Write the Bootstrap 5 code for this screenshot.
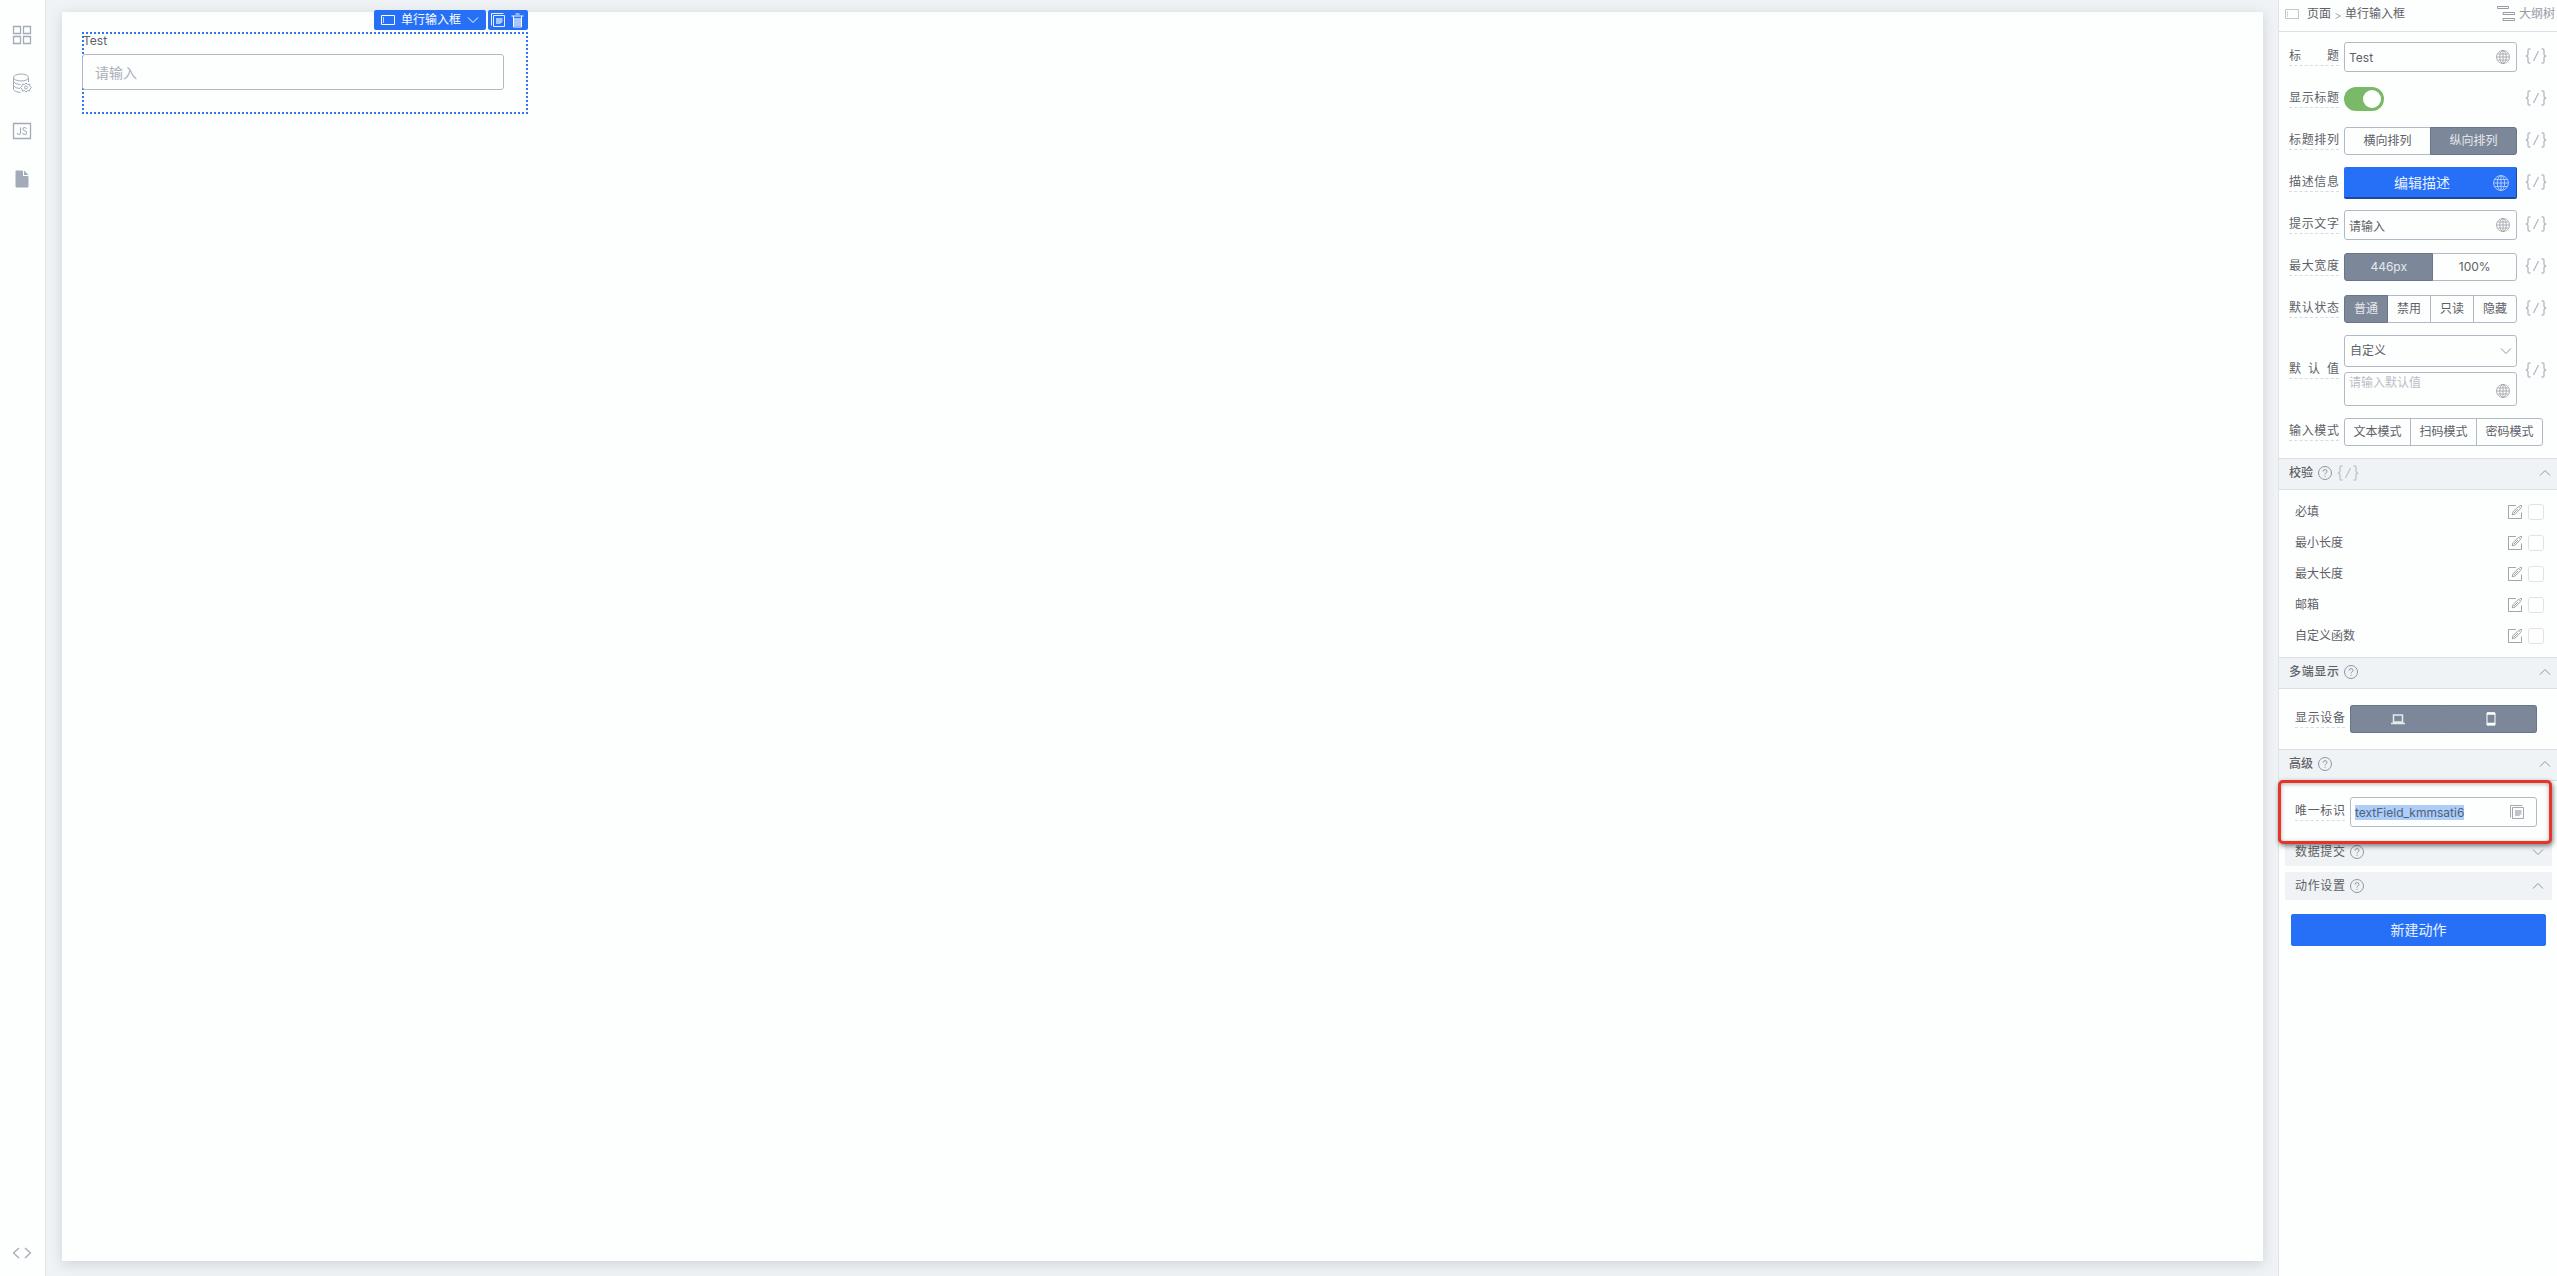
<!DOCTYPE html>
<html lang="zh-CN">
<head>
<meta charset="utf-8">
<meta name="viewport" content="width=device-width, initial-scale=1">
<title>页面设计器</title>
<link href="https://cdn.jsdelivr.net/npm/bootstrap@5.3.0/dist/css/bootstrap.min.css" rel="stylesheet">
<style>
:root{--ink:#5d6167;--line:#b3b9c4;--mute:#a4abb8;--pale:#c3c6ce;--slate:#7c8899;--blue:#2570f7;--bar:#f0f3f5}
body{font-family:Inter,"Noto Sans CJK SC",sans-serif;font-size:12px;line-height:18px;color:var(--ink);background:#eff3f5}
svg{display:block;fill:none;stroke:currentColor}
button{font:inherit}
.icon-btn{border:0;background:none;padding:0;color:inherit;display:block}
.rail{width:46px;background:#fdfefe;border-right:1px solid #e1e5e9;color:var(--mute);padding:23px 2px 11px 0}
.rail-list{gap:24px}
.stage{padding:12px 16px 15px}
.sheet{background:#fdfefe;box-shadow:0 3px 12px rgba(60,70,90,.18);padding:20px}
.widget-box{width:446px;height:82px;border:2px dotted #2f78ec;position:relative}
.widget-box label{display:block;line-height:20px;margin:-3px 0 3px -1px}
.widget-box .form-control{width:422px;height:36px;margin-left:-2px;padding:0 12px;font-size:14px;border-radius:3px}
.widget-tools{position:absolute;right:-2px;top:-24px;gap:2px;color:#fff}
.widget-tools>*{height:20px;background:var(--blue);border-radius:2px}
.tool-name{padding:0 7px;gap:6px;border:0;color:#fff;height:20px}
.tool-pair{width:40px;gap:6px;padding:0 3px}
.panel{width:278px;background:#fdfefe;box-shadow:-1px 0 0 #dfe3e8}
.crumbs{height:32px;border-bottom:1px solid #dce1e7;padding:0 2px 4px 6px}
.crumbs a{color:var(--ink);text-decoration:none}
.fields{padding:4px 10px 5px}
.line{height:42px;gap:5px}
.line-tall{height:81px}
.name{flex:0 0 50px;text-align-last:justify;border-bottom:1px dashed #d8dbe0;margin-top:-2px}
.control{flex:0 0 173px;position:relative}
.code{margin-left:3px;margin-top:-2px;color:#b9bdc6}
.form-control,.form-select{border:1px solid var(--line);border-radius:3px;background-color:#fdfefe;color:var(--ink);font-size:12px;line-height:18px;min-height:0;box-shadow:none!important}
.form-control:focus{border-color:var(--line);color:var(--ink);background-color:#fdfefe}
.form-control::placeholder{color:#a9afba}
.control .form-control{height:30px;padding:0 24px 0 4px}
.control textarea.form-control{height:34px;padding:1px 24px 0 4px;resize:none;margin-top:5px;overflow:hidden}
.control textarea.form-control::placeholder{color:#b9bec7}
.form-select{height:32px;padding:0 24px 0 5px;background-image:none}
.globe{position:absolute;right:7px;top:8px;color:#9a9fa8}
.globe-low{top:auto;bottom:8px}
.select-arrow{position:absolute;right:5px;top:12px;color:#8f959f}
.form-check-input{box-shadow:none!important}
.form-switch{padding:0;min-height:0;margin:0;height:24px}
.form-switch .form-check-input{width:40px;height:24px;margin:0;float:none;display:block;border:0;background-color:#ddd}
.form-switch .form-check-input:checked{background-color:#7ab968}
.btn-group{height:28px}
.btn-seg{--bs-btn-color:var(--ink);--bs-btn-border-color:var(--line);--bs-btn-border-radius:3px;--bs-btn-active-bg:var(--slate);--bs-btn-active-border-color:#69768a;--bs-btn-active-color:#e6e9ed;--bs-btn-font-size:12px;--bs-btn-line-height:18px;--bs-btn-padding-x:0;--bs-btn-padding-y:4px;flex:1 1 0}
.btn-main{--bs-btn-bg:var(--blue);--bs-btn-color:#e9f1fe;--bs-btn-border-color:var(--blue);--bs-btn-border-radius:2px;--bs-btn-font-size:14px;--bs-btn-line-height:20px;--bs-btn-padding-y:5px;width:100%;height:32px}
.btn-shade{border-width:0 1px 2px 0;border-color:#1d48a0;padding:6px 24px 4px 8px}
.btn-shade svg{position:absolute;right:8px;top:8px;color:#b9d0fc}
.strip{height:32px;background:var(--bar);border:solid #dadfe6;border-width:1px 0;padding:0 6px 2px 10px;gap:5px;font-weight:500}
.strip h2,.sub h2{font-size:12px;line-height:18px;font-weight:inherit;margin:0}
.wide{width:50px;text-align-last:justify}
.strip svg,.sub svg{color:#8f96a2}
.strip .code-mark{color:var(--pale)}
.checks{padding:6px 13px 6px 16px;list-style:none;margin:0}
.checks li{height:31px;gap:6px}
.checks .icon-btn{color:#8b8f97}
.checks .form-check-input{width:16px;height:16px;margin:0;border:1px solid #dfe2e8;border-radius:3px}
.device{height:60px;padding:0 20px 0 16px;gap:5px}
.device .btn-group{flex:1}
.btn-seg svg{margin:auto}
.device .btn-check:checked+.btn+.btn-check+.btn{border-left-color:var(--slate)}
.device .btn-check:checked+.btn:first-of-type{border-right-color:var(--slate)}
.marked{border:3px solid #e5342a;border-radius:5px;margin:-1px 5px -6px -1px;height:64px;padding:0 12px 0 14px;gap:5px;position:relative;z-index:1;background:#fdfefe;box-shadow:1px 2px 5px rgba(0,0,0,.5),inset 0 1px 4px rgba(0,0,0,.3)}
.marked .control{flex:1}
.marked .form-control::selection{background:#aecdf8;color:#4e6179}
.copy-id{position:absolute;right:13px;top:8px;color:#9a9fa8}
.sub{height:28px;background:var(--bar);margin:0 5px 6px 6px;padding:0 8px 0 10px;gap:5px}
.sub-first{margin-top:-1px}
.foot{padding:8px 11px 0 12px}
</style>
</head>
<body>
<svg width="0" height="0" class="position-absolute" aria-hidden="true">
<symbol id="globe" viewBox="0 0 14 14"><g stroke-width=".8"><circle cx="7" cy="7" r="6.500"/><ellipse cx="7" cy="7" rx="3.200" ry="6.500"/><path d="M7 .5v13M.5 7h13M1.500 4h11M1.500 10h11"/></g></symbol>
<symbol id="code" viewBox="0 0 22 16"><path d="M5.500 1H4.200Q3 1 3 2.500v3.200Q3 7.800.8 8 3 8.200 3 10.300v3.200Q3 15 4.200 15h1.300M13.500 3 8.500 13M16.500 1h1.300Q19 1 19 2.500v3.200q0 2.100 2.200 2.300-2.200.2-2.200 2.300v3.200q0 1.500-1.200 1.500h-1.300" stroke-width="1.400"/></symbol>
<symbol id="help" viewBox="0 0 14 14"><circle cx="7" cy="7" r="6.500"/><path d="M5 5.600Q5 3.600 7 3.600t2 1.800Q9 6.500 7.800 7 7 7.400 7 8.500M7 9.800v1.100"/></symbol>
<symbol id="up" viewBox="0 0 12 8"><path d="M1 6.500 6 1.500l5 5"/></symbol>
<symbol id="down" viewBox="0 0 12 8"><path d="m1 1.500 5 5 5-5"/></symbol>
<symbol id="box" viewBox="0 0 14 10"><path d="M.5.5h13v9H.5z"/><path d="M2.500 2v6" opacity=".7"/></symbol>
<symbol id="copy" viewBox="0 0 14 14"><path d="M2.500 2.500h11v11h-11zM.5 12.500V.5h12" stroke-width=".9"/><path d="M5 5h6.500v4L9 11H5z" fill="currentColor" fill-opacity=".6" stroke="none"/></symbol>
<symbol id="edit" viewBox="0 0 15 15"><path d="M8.500.5h-8v14h14V8M12.500.5h2v2" stroke-width=".9"/><path d="m4.500 10.500.9-3.300 5.600-5.600q2.200.2 2.400 2.300l-5.600 5.700zM6.300 8.700l4.500-4.500" stroke-width=".9"/></symbol>
</svg>
<div class="d-flex min-vh-100">
<nav class="rail flex-shrink-0 d-flex flex-column justify-content-between align-items-center" aria-label="工具">
<div class="rail-list d-flex flex-column">
<button class="icon-btn" aria-label="组件"><svg width="20" height="24" viewBox="0 0 20 24" stroke-width="1.300"><path d="M1.500 3.500h7v7h-7zm10 0h7v7h-7zm-10 10h7v7h-7zm10 0h7v7h-7z"/></svg></button>
<button class="icon-btn" aria-label="数据源"><svg width="20" height="24" viewBox="0 0 20 24"><ellipse cx="9" cy="6.500" rx="7.500" ry="3.500"/><path d="M1.500 6.500v12q1 2.500 7 3M16.500 6.500V11M1.500 10.500q1.500 3 7 3M1.500 14.500q1.500 3 6.500 3"/><path d="m14 12 1.500 1.500 2-.4.5 2 1.500 1.400-1.500 1.500-.5 2-2-.4L14 21l-1.500-1.400-2 .4-.5-2-1.500-1.500 1.500-1.400.5-2 2 .4z"/><circle cx="14" cy="16.500" r="1.500"/></svg></button>
<button class="icon-btn" aria-label="脚本"><svg width="20" height="24" viewBox="0 0 20 24"><path d="M1.500 4.500h17v15h-17z" stroke-width="1.300"/><path d="M8.500 8.500v5.200q0 1.800-1.600 1.800T5.300 14M14.500 9.800q-.5-1.300-2-1.300t-1.600 1.600q0 1.200 1.800 1.700 2 .5 1.900 2-.2 1.700-2 1.700t-2-1.700" stroke-width="1.100"/></svg></button>
<button class="icon-btn" aria-label="页面"><svg width="20" height="24" viewBox="0 0 20 24"><path d="M4 4h6.500v5.500H16V20H4z" fill="currentColor"/><path d="M12 3.500v4.500h4.500z" fill="currentColor" stroke="none"/></svg></button>
</div>
<button class="icon-btn" aria-label="源码"><svg width="20" height="24" viewBox="0 0 20 24" stroke-width="1.300"><path d="m7 7-5.500 5L7 17m6-10 5.500 5-5.500 5"/></svg></button>
</nav>
<main class="stage flex-grow-1 d-flex">
<section class="sheet flex-grow-1">
<div class="widget-box">
<div class="widget-tools d-flex">
<button class="tool-name d-flex align-items-center"><svg width="14" height="10"><use href="#box"/></svg><span>单行输入框</span><svg width="12" height="8"><use href="#down"/></svg></button>
<div class="tool-pair d-flex align-items-center"><button class="icon-btn" aria-label="复制"><svg width="14" height="14"><use href="#copy"/></svg></button><button class="icon-btn" aria-label="删除"><svg width="13" height="15" viewBox="0 0 13 15"><path d="M.5 3h12M4.500 1h4M2.500 3v11h8V3"/><path d="M3 5h7v8H3z" fill="currentColor" fill-opacity=".6" stroke="none"/></svg></button></div>
</div>
<label for="preview">Test</label>
<input id="preview" class="form-control" placeholder="请输入">
</div>
</section>
</main>
<aside class="panel flex-shrink-0">
<header class="crumbs d-flex align-items-center">
<svg width="14" height="10" class="me-2" style="color:var(--pale)"><use href="#box"/></svg>
<a href="#">页面</a><svg width="6" height="8" viewBox="0 0 6 8" class="mx-1 mt-1" style="color:var(--mute)"><path d="m.5 1.500 5 2.500-5 2.500"/></svg><a href="#">单行输入框</a>
<a href="#" class="ms-auto d-flex align-items-center gap-1" style="color:#979ba2"><svg width="18" height="17" viewBox="0 0 18 17"><path d="M.5 1.500h11v2H.5zM6 7.500h11.500v2H6zM6 13.500h11.500v2H6z"/></svg>大纲树</a>
</header>
<form class="fields">
<div class="line d-flex align-items-center"><label class="name" for="title">标题</label><div class="control"><input id="title" class="form-control" value="Test"><svg class="globe" width="14" height="14"><use href="#globe"/></svg></div><button type="button" class="icon-btn code" aria-label="绑定"><svg width="22" height="16"><use href="#code"/></svg></button></div>
<div class="line d-flex align-items-center"><label class="name" for="show">显示标题</label><div class="control form-check form-switch"><input id="show" type="checkbox" role="switch" class="form-check-input" checked></div><button type="button" class="icon-btn code" aria-label="绑定"><svg width="22" height="16"><use href="#code"/></svg></button></div>
<div class="line d-flex align-items-center"><span class="name">标题排列</span><div class="control btn-group"><input type="radio" class="btn-check" name="dir" id="d1"><label class="btn btn-seg" for="d1">横向排列</label><input type="radio" class="btn-check" name="dir" id="d2" checked><label class="btn btn-seg" for="d2">纵向排列</label></div><button type="button" class="icon-btn code" aria-label="绑定"><svg width="22" height="16"><use href="#code"/></svg></button></div>
<div class="line d-flex align-items-center"><span class="name">描述信息</span><div class="control"><button type="button" class="btn btn-main btn-shade">编辑描述<svg width="16" height="16"><use href="#globe"/></svg></button></div><button type="button" class="icon-btn code" aria-label="绑定"><svg width="22" height="16"><use href="#code"/></svg></button></div>
<div class="line d-flex align-items-center"><label class="name" for="hint">提示文字</label><div class="control"><input id="hint" class="form-control" value="请输入"><svg class="globe" width="14" height="14"><use href="#globe"/></svg></div><button type="button" class="icon-btn code" aria-label="绑定"><svg width="22" height="16"><use href="#code"/></svg></button></div>
<div class="line d-flex align-items-center"><span class="name">最大宽度</span><div class="control btn-group"><input type="radio" class="btn-check" name="max" id="m1" checked><label class="btn btn-seg" for="m1">446px</label><input type="radio" class="btn-check" name="max" id="m2"><label class="btn btn-seg" for="m2">100%</label></div><button type="button" class="icon-btn code" aria-label="绑定"><svg width="22" height="16"><use href="#code"/></svg></button></div>
<div class="line d-flex align-items-center"><span class="name">默认状态</span><div class="control btn-group"><input type="radio" class="btn-check" name="st" id="s1" checked><label class="btn btn-seg" for="s1">普通</label><input type="radio" class="btn-check" name="st" id="s2"><label class="btn btn-seg" for="s2">禁用</label><input type="radio" class="btn-check" name="st" id="s3"><label class="btn btn-seg" for="s3">只读</label><input type="radio" class="btn-check" name="st" id="s4"><label class="btn btn-seg" for="s4">隐藏</label></div><button type="button" class="icon-btn code" aria-label="绑定"><svg width="22" height="16"><use href="#code"/></svg></button></div>
<div class="line line-tall d-flex align-items-center"><label class="name" for="def">默认值</label><div class="control"><div class="position-relative"><select id="def" class="form-select"><option>自定义</option></select><svg class="select-arrow" width="12" height="8"><use href="#down"/></svg></div><textarea class="form-control" aria-label="默认值内容" placeholder="请输入默认值"></textarea><svg class="globe globe-low" width="14" height="14"><use href="#globe"/></svg></div><button type="button" class="icon-btn code" aria-label="绑定"><svg width="22" height="16"><use href="#code"/></svg></button></div>
<div class="line d-flex align-items-center"><span class="name">输入模式</span><div class="btn-group flex-grow-1 me-1"><input type="radio" class="btn-check" name="mode" id="i1"><label class="btn btn-seg" for="i1">文本模式</label><input type="radio" class="btn-check" name="mode" id="i2"><label class="btn btn-seg" for="i2">扫码模式</label><input type="radio" class="btn-check" name="mode" id="i3"><label class="btn btn-seg" for="i3">密码模式</label></div></div>
</form>
<div class="strip d-flex align-items-center"><h2>校验</h2><svg width="14" height="14"><use href="#help"/></svg><svg width="22" height="16" class="code-mark"><use href="#code"/></svg><svg class="ms-auto" width="12" height="8"><use href="#up"/></svg></div>
<ul class="checks">
<li class="d-flex align-items-center"><label for="c1" class="me-auto">必填</label><button class="icon-btn" aria-label="编辑"><svg width="14" height="14"><use href="#edit"/></svg></button><input id="c1" type="checkbox" class="form-check-input"></li>
<li class="d-flex align-items-center"><label for="c2" class="me-auto">最小长度</label><button class="icon-btn" aria-label="编辑"><svg width="14" height="14"><use href="#edit"/></svg></button><input id="c2" type="checkbox" class="form-check-input"></li>
<li class="d-flex align-items-center"><label for="c3" class="me-auto">最大长度</label><button class="icon-btn" aria-label="编辑"><svg width="14" height="14"><use href="#edit"/></svg></button><input id="c3" type="checkbox" class="form-check-input"></li>
<li class="d-flex align-items-center"><label for="c4" class="me-auto">邮箱</label><button class="icon-btn" aria-label="编辑"><svg width="14" height="14"><use href="#edit"/></svg></button><input id="c4" type="checkbox" class="form-check-input"></li>
<li class="d-flex align-items-center"><label for="c5" class="me-auto">自定义函数</label><button class="icon-btn" aria-label="编辑"><svg width="14" height="14"><use href="#edit"/></svg></button><input id="c5" type="checkbox" class="form-check-input"></li>
</ul>
<div class="strip d-flex align-items-center"><h2 class="wide">多端显示</h2><svg width="14" height="14"><use href="#help"/></svg><svg class="ms-auto" width="12" height="8"><use href="#up"/></svg></div>
<div class="device d-flex align-items-center"><span class="name">显示设备</span><div class="btn-group"><input type="checkbox" class="btn-check" id="pc" checked><label class="btn btn-seg d-flex" for="pc" aria-label="电脑"><svg width="14" height="11" viewBox="0 0 14 11"><path d="M2.500 1h9v7h-9zM0 9.500h14" stroke-width="1.500"/></svg></label><input type="checkbox" class="btn-check" id="ph" checked><label class="btn btn-seg d-flex" for="ph" aria-label="手机"><svg width="10" height="14" viewBox="0 0 10 14" style="color:#fff"><path d="M1 1h8v12H1z"/><path d="M1 1.500h8M1 12h8" stroke-width="2.500"/></svg></label></div></div>
<div class="strip d-flex align-items-center"><h2>高级</h2><svg width="14" height="14"><use href="#help"/></svg><svg class="ms-auto" width="12" height="8"><use href="#up"/></svg></div>
<div class="marked d-flex align-items-center"><label class="name" for="uid">唯一标识</label><div class="control"><input id="uid" class="form-control" value="textField_kmmsati6"><button class="icon-btn copy-id" aria-label="复制标识"><svg width="14" height="14"><use href="#copy"/></svg></button></div></div>
<div class="sub sub-first d-flex align-items-center"><h2 class="wide">数据提交</h2><svg width="14" height="14"><use href="#help"/></svg><svg class="ms-auto" width="12" height="8"><use href="#down"/></svg></div>
<div class="sub d-flex align-items-center"><h2 class="wide">动作设置</h2><svg width="14" height="14"><use href="#help"/></svg><svg class="ms-auto" width="12" height="8"><use href="#up"/></svg></div>
<div class="foot"><button class="btn btn-main">新建动作</button></div>
</aside>
</div>
<script src="https://cdn.jsdelivr.net/npm/bootstrap@5.3.0/dist/js/bootstrap.bundle.min.js"></script>
<script>
const uid=document.getElementById('uid');
uid.focus({preventScroll:true});
uid.select();
</script>
</body>
</html>
